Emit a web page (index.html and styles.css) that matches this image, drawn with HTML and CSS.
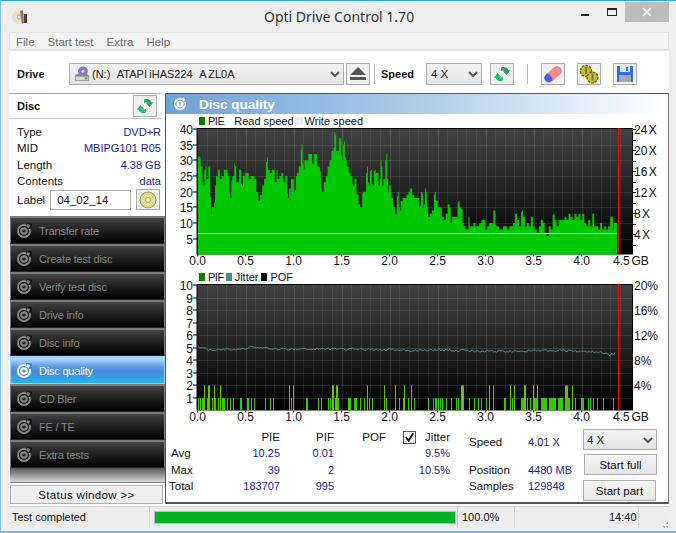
FILE: index.html
```html
<!DOCTYPE html>
<html lang="en">
<head>
<meta charset="utf-8">
<title>Opti Drive Control 1.70</title>
<link rel="stylesheet" href="styles.css">
</head>
<body>
<svg class="defs" width="0" height="0" aria-hidden="true">
  <symbol id="disc" viewBox="0 0 16 16">
    <circle cx="8" cy="8" r="7" fill="currentColor"/>
    <circle cx="8" cy="8" r="4.4" fill="none" stroke="var(--cut)" stroke-width="1.2"/>
    <circle cx="8" cy="8" r="1.6" fill="var(--cut)"/>
    <path d="M10 0h6v5l-3 1-2-2z" fill="var(--cut)"/>
    <path d="M11 1l3 1-1 3-2-1z" fill="currentColor"/>
  </symbol>
  <symbol id="arrows" viewBox="0 0 24 22">
    <g stroke="#fff" stroke-width="2" fill="#fff">
      <path d="M11 4C14 2.500 18 3.500 19 7l2 0-4 5-4-4 2 0C14 7 12 7 11 8z"/>
      <path d="M11 4C14 2.500 18 3.500 19 7l2 0-4 5-4-4 2 0C14 7 12 7 11 8z" transform="rotate(180 12 11)"/>
    </g>
    <path d="M11 4C14 2.500 18 3.500 19 7l2 0-4 5-4-4 2 0C14 7 12 7 11 8z" fill="#2f9f5f"/>
    <path d="M11 4C14 2.500 18 3.500 19 7l2 0-4 5-4-4 2 0C14 7 12 7 11 8z" fill="#1fbf70" transform="rotate(180 12 11)"/>
  </symbol>
</svg>

<div class="window">
  <header class="titlebar">
    <svg class="app-icon" viewBox="0 0 16 16" width="16" height="16">
      <circle cx="7" cy="8" r="7" fill="#e9dfc4"/>
      <circle cx="7" cy="8" r="2" fill="#fff" stroke="#b5a98a"/>
      <path d="M8 2l3-1 1 13-2 1z" fill="#8a7668"/>
      <path d="M12 5h3v9h-3z" fill="#5a3a30"/>
    </svg>
    <h1 class="title">Opti Drive Control 1.70</h1>
    <div class="win-controls">
      <span class="win-min"></span>
      <span class="win-max"></span>
      <span class="win-close">
        <svg viewBox="0 0 10 10" width="10" height="10"><path d="M1 1l8 8M9 1l-8 8" stroke="#fff" stroke-width="1.6"/></svg>
      </span>
    </div>
  </header>

  <div class="client">
    <nav class="menubar">
      <span>File</span><span>Start test</span><span>Extra</span><span>Help</span>
    </nav>

    <div class="toolbar">
      <b class="tool-label drive-label">Drive</b>
      <div class="combo drive-combo">
        <svg class="drive-icon" viewBox="0 0 18 18" width="16" height="16">
          <circle cx="10" cy="6" r="5.5" fill="#8a76b8"/>
          <circle cx="10" cy="6" r="1.6" fill="#e8e4f4"/>
          <path d="M1 11l2-2h12l2 2v6H1z" fill="#8d8d8d"/>
          <path d="M2 12h14v4H2z" fill="#d8d8d8"/>
          <path d="M12 13h3v2h-3z" fill="#2fae4a"/>
        </svg>
        <span class="combo-text drive-text">(N:)   ATAPI iHAS224   A ZL0A</span>
        <svg class="chev" viewBox="0 0 10 6" width="10" height="6"><path d="M1 1l4 4 4-4" fill="none" stroke="#555" stroke-width="2"/></svg>
      </div>
      <button class="tbtn eject-btn" type="button" aria-label="Eject">
        <svg viewBox="0 0 18 14" width="18" height="14"><path d="M9 0l8 8H1z" fill="#555"/><path d="M1 10h16v3H1z" fill="#555"/></svg>
      </button>
      <i class="tool-sep first-sep"></i>
      <b class="tool-label speed-label">Speed</b>
      <div class="combo speed-combo">
        <span class="combo-text">4 X</span>
        <svg class="chev" viewBox="0 0 10 6" width="10" height="6"><path d="M1 1l4 4 4-4" fill="none" stroke="#555" stroke-width="2"/></svg>
      </div>
      <button class="tbtn refresh-btn" type="button" aria-label="Refresh"><svg width="24" height="22"><use href="#arrows"/></svg></button>
      <i class="tool-sep second-sep"></i>
      <button class="tbtn erase-btn" type="button" aria-label="Erase">
        <svg viewBox="0 0 20 18" width="20" height="18">
          <path d="M3 10l9-8c2-1 5 0 6 2s0 4-1 5l-8 7z" fill="#f58a8a" stroke="#d86a6a" stroke-width=".6"/>
          <path d="M4 9c2 0 5 3 5 6-1 2-4 3-6 1s-2-5 1-7z" fill="#4c5cf0" stroke="#3444c8" stroke-width=".6"/>
        </svg>
      </button>
      <button class="tbtn gears-btn" type="button" aria-label="Settings">
        <svg viewBox="0 0 20 20" width="20" height="20">
          <circle cx="7" cy="7" r="5.6" fill="#c8c010" stroke="#5c5a10" stroke-width="1.4" stroke-dasharray="2.4 1.2"/>
          <circle cx="13.5" cy="13.5" r="5.4" fill="#c8c010" stroke="#5c5a10" stroke-width="1.4" stroke-dasharray="2.4 1.2"/>
          <path d="M6 3h2v7H6zM12.5 9.500h2v7h-2z" fill="#70706a"/>
        </svg>
      </button>
      <button class="tbtn save-btn" type="button" aria-label="Save">
        <svg viewBox="0 0 18 18" width="18" height="18">
          <path d="M1 1h16v16H1z" fill="#2e6ef0"/>
          <path d="M4 1h10v6H4z" fill="#dfe9fb"/>
          <path d="M10 2h2v4h-2z" fill="#2e6ef0"/>
          <path d="M3 10h12v7H3z" fill="#a8a8a8"/>
        </svg>
      </button>
    </div>

    <div class="main">
      <aside class="side">
        <div class="disc-head">
          <b>Disc</b>
          <button class="tbtn" type="button" aria-label="Refresh disc"><svg width="24" height="22"><use href="#arrows"/></svg></button>
        </div>
        <dl class="disc-info">
          <dt>Type</dt><dd>DVD+R</dd>
          <dt>MID</dt><dd>MBIPG101 R05</dd>
          <dt>Length</dt><dd>4.38 GB</dd>
          <dt>Contents</dt><dd>data</dd>
        </dl>
        <div class="label-row">
          <span>Label</span>
          <span class="label-input">04_02_14</span>
          <button class="tbtn" type="button" aria-label="Read label">
            <svg viewBox="0 0 18 18" width="18" height="18">
              <circle cx="9" cy="9" r="8" fill="#dcdc80" stroke="#8a8a60" stroke-width=".8"/>
              <circle cx="9" cy="9" r="5" fill="none" stroke="#eeeebb"/>
              <circle cx="9" cy="9" r="2.4" fill="#f4f4e0" stroke="#8a8a60" stroke-width=".8"/>
            </svg>
          </button>
        </div>
        <ul class="nav">
          <li><svg class="nav-icon"><use href="#disc"/></svg>Transfer rate</li>
          <li><svg class="nav-icon"><use href="#disc"/></svg>Create test disc</li>
          <li><svg class="nav-icon"><use href="#disc"/></svg>Verify test disc</li>
          <li><svg class="nav-icon"><use href="#disc"/></svg>Drive info</li>
          <li><svg class="nav-icon"><use href="#disc"/></svg>Disc info</li>
          <li class="active"><svg class="nav-icon"><use href="#disc"/></svg>Disc quality</li>
          <li><svg class="nav-icon"><use href="#disc"/></svg>CD Bler</li>
          <li><svg class="nav-icon"><use href="#disc"/></svg>FE / TE</li>
          <li><svg class="nav-icon"><use href="#disc"/></svg>Extra tests</li>
        </ul>
        <div class="nav-rest"></div>
        <button class="status-btn" type="button">Status window &gt;&gt;</button>
      </aside>

      <section class="panel">
        <h2 class="panel-head">
          <svg class="panel-icon"><use href="#disc"/></svg>Disc quality
        </h2>
        <div class="legend legend-top">
          <i class="sw sw-pie"></i><span class="tight">PIE</span>
          <i class="sw sw-read"></i><span>Read speed</span>
          <i class="sw sw-write"></i><span>Write speed</span>
        </div>
        <svg id="chart1" class="chart chart-top" viewBox="166 128 501 142" width="501" height="142"></svg>
        <div class="legend legend-bottom">
          <i class="sw sw-pie"></i><span class="tight">PIF</span>
          <i class="sw sw-jit"></i><span>Jitter</span>
          <i class="sw sw-pof"></i><span>POF</span>
        </div>
        <svg id="chart2" class="chart chart-bottom" viewBox="166 284 501 144" width="501" height="144"></svg>

        <div class="stats">
          <div class="table">
            <span></span><span class="h">PIE</span><span class="h">PIF</span><span class="h">POF</span>
            <span class="h jitter-head"><i class="check"><svg viewBox="0 0 12 12" width="12" height="12"><path d="M2 6l3 4 5-8" fill="none" stroke="#000" stroke-width="2"/></svg></i>Jitter</span>
            <span>Avg</span><span class="v">10.25</span><span class="v">0.01</span><span></span><span class="v">9.5%</span>
            <span>Max</span><span class="v">39</span><span class="v">2</span><span></span><span class="v">10.5%</span>
            <span class="total">Total</span><span class="v">183707</span><span class="v">995</span><span></span><span></span>
          </div>
          <div class="readout">
            <span>Speed</span><span class="val">4.01 X</span>
            <span></span><span></span>
            <span>Position</span><span class="val">4480 MB</span>
            <span>Samples</span><span class="val">129848</span>
          </div>
          <div class="actions">
            <div class="combo action-combo">
              <span class="combo-text">4 X</span>
              <svg class="chev" viewBox="0 0 10 6" width="10" height="6"><path d="M1 1l4 4 4-4" fill="none" stroke="#555" stroke-width="2"/></svg>
            </div>
            <button class="act-btn" type="button">Start full</button>
            <button class="act-btn part" type="button">Start part</button>
          </div>
        </div>
      </section>
    </div>

    <footer class="statusbar">
      <span class="st-msg">Test completed</span>
      <span class="st-prog"><i class="st-fill"></i></span>
      <span class="st-pct">100.0%</span>
      <span class="st-gap"></span>
      <span class="st-time">14:40</span>
      <span class="st-grip"></span>
    </footer>
  </div>
</div>
<script src="charts.js"></script>
</body>
</html>
```

FILE: styles.css
```css
* { box-sizing: border-box; }
html, body { margin: 0; padding: 0; }
body { width: 676px; height: 533px; overflow: hidden; font: 11.5px "Liberation Sans", Arial, sans-serif; color: #111; }
.defs { position: absolute; }
button { font: inherit; color: inherit; padding: 0; }

.window { width: 676px; height: 533px; display: flex; flex-direction: column; background: #eeeeee; border-top: 1px solid #3a9fe6; border-bottom: 2px solid #6fbbe8; border-left: 1px solid #7cc0ea; }

.titlebar { height: 31px; display: flex; align-items: flex-start; position: relative; flex: none; }
.app-icon { margin: 8px 0 0 11px; }
.title { position: absolute; left: 263px; top: 6px; margin: 0; font: 400 14px "Noto Sans", sans-serif; color: #333; white-space: nowrap; }
.win-controls { margin-left: auto; margin-right: 7px; display: flex; align-items: flex-start; }
.win-min { width: 8px; height: 2px; background: #222; margin: 13px 18px 0 0; }
.win-max { width: 10px; height: 8px; border: 1px solid #222; border-top-width: 2px; margin: 7px 8px 0 0; }
.win-close { width: 44px; height: 20px; margin-top: 1px; background: #bcbcbc; display: flex; align-items: center; justify-content: center; }

.client { flex: 1; margin: 0 7px 0 8px; padding-bottom: 3px; display: flex; flex-direction: column; min-height: 0; }

.menubar { height: 19px; flex: none; display: flex; align-items: center; background: #f4f4f4; border: 1px solid #e3e3e3; border-bottom: 2px solid #e3e3e3; padding: 1px 0 0 6px; color: #6a6a6a; }
.menubar span { margin-right: 13px; }

.toolbar { height: 42px; flex: none; background: #fff; display: flex; align-items: center; padding-top: 3px; }
.tool-label { font-size: 11px; color: #111; }
.drive-label { margin-left: 8px; width: 52px; }
.combo { height: 22px; display: flex; align-items: center; border: 1px solid #adadad; background: linear-gradient(#f2f2f2, #e4e4e4); color: #222; position: relative; }
.drive-combo { width: 275px; padding-left: 4px; }
.drive-icon { flex: none; margin-right: 2px; }
.combo-text { white-space: pre; }
.drive-text { font-size: 11px; word-spacing: -.7px; }
.chev { margin-left: auto; margin-right: 3px; flex: none; }
.tbtn { width: 24px; height: 22px; border: 1px solid #adadad; background: #f0f0f0; display: flex; align-items: center; justify-content: center; flex: none; }
.tbtn svg { display: block; }
.eject-btn { margin-left: 2px; }
.tool-sep { width: 1px; height: 20px; background: #b5b5b5; flex: none; }
.first-sep { margin-left: 4px; }
.speed-label { margin-left: 6px; width: 45px; }
.speed-combo { width: 56px; padding-left: 4px; }
.refresh-btn { margin-left: 8px; }
.second-sep { margin-left: 13px; }
.erase-btn { margin-left: 13px; }
.gears-btn { margin-left: 12px; }
.save-btn { margin-left: 12px; }

.main { flex: 1; display: flex; min-height: 0; background: #fff; }

.side { width: 156px; flex: none; display: flex; flex-direction: column; }
.disc-head { height: 26px; flex: none; border-top: 1px solid #a8a8a8; border-bottom: 1px solid #c8c8c8; display: flex; align-items: center; justify-content: space-between; padding: 0 4px 0 8px; margin-right: 4px; }
.disc-head b { font-size: 11px; }
.disc-info { margin: 5px 4px 0 8px; display: grid; grid-template-columns: auto 1fr; grid-auto-rows: 16.300px; align-items: center; }
.disc-info dt { color: #111; }
.disc-info dd { margin: 0; text-align: right; color: #1c1c9c; font-size: 11px; }
.label-row { display: flex; align-items: center; margin: 0 0 0 8px; height: 21px; }
.label-input { width: 81px; height: 20px; margin-left: 5px; border: 1px solid #b0b0b0; padding: 3px 0 0 6px; }
.label-row .tbtn { margin-left: 5px; height: 21px; }

.nav { list-style: none; margin: 6px 0 0 1px; padding: 0; width: 155px; font-size: 11px; letter-spacing: -.2px; }
.nav li { height: 28px; display: flex; align-items: center; padding-left: 5px; color: #858585; background: linear-gradient(#4a4a4a 0, #3a3a3a 10%, #000 100%); border: 1px solid #7a7a7a; border-width: 2px 1px 0 1px; border-bottom: 1px solid #222; --cut: #151515; }
.nav li.active { color: #fff; background: linear-gradient(#b6dcff 0, #5b9ae0 35%, #4a88d8 55%, #1fb6f0 100%); border-color: #a0d0ff; --cut: #3f87d8; }
.nav-icon { width: 16px; height: 16px; margin-right: 7px; flex: none; }
.nav-rest { height: 15px; flex: none; margin-left: 1px; width: 155px; background: linear-gradient(#555, #d8d8d8); border-bottom: 1px solid #888; }
.status-btn { margin: 2px 0 0 1px; width: 153px; height: 19px; border: 1px solid #b0b0b0; background: #efefef; letter-spacing: .35px; }

.panel { flex: 1; border: 1px solid #555; border-right-color: #777; border-bottom-width: 2px; display: flex; flex-direction: column; min-width: 0; margin-bottom: 2px; --cut: #79abdc; color: #111; }
.panel-head { height: 20px; flex: none; margin: 0; display: flex; align-items: center; padding-left: 7px; color: #fff; font: 700 13.500px "Liberation Sans", sans-serif; background: linear-gradient(90deg, #6fa3d8, #a5c8e8 45%, #fff 100%); }
.panel-icon { width: 14px; height: 14px; margin-right: 12px; }
.legend { height: 14px; flex: none; display: flex; align-items: center; padding-left: 33px; font-size: 11px; }
.tight { letter-spacing: -.5px; }
.sw { width: 6px; height: 8px; margin-right: 3px; flex: none; }
.sw-pie { background: #008000; }
.sw-read { background: #fff; margin-left: 1px; }
.sw-write { background: #eee; width: 9px; margin: 0 2px 0 0; }
.sw-jit { background: #4d8a8a; margin-left: 2px; }
.sw-pof { background: #000; margin-left: 3px; }
.chart { display: block; overflow: visible; flex: none; }
.chart text { font: 12px "Liberation Sans", sans-serif; fill: #111; }

.stats { flex: 1; display: flex; min-height: 0; padding-top: 1px; }
.table { width: 285px; margin-left: 4px; display: grid; grid-template-columns: 49px 60px 54px 52px 64px; grid-auto-rows: 16.330px; align-items: center; flex: none; padding-left: 1px; }
.table .h { text-align: right; }
.table .v { text-align: right; color: #1c1c9c; font-size: 11px; }
.total { margin-left: -2px; }
.jitter-head { display: flex; align-items: center; justify-content: flex-end; }
.check { width: 13px; height: 13px; border: 1px solid #555; margin-right: 9px; display: flex; align-items: center; justify-content: center; }
.readout { margin-left: 14px; width: 114px; padding-top: 5px; display: grid; grid-template-columns: 59px 1fr; grid-template-rows: 16px 12px 16px 16px; align-items: center; flex: none; }
.val { color: #1c1c9c; font-size: 11px; }
.actions { flex: none; display: flex; flex-direction: column; align-items: flex-start; }
.action-combo { width: 74px; height: 21px; padding-left: 3px; }
.act-btn { width: 73px; height: 21px; margin: 4px 0 0 1px; border: 1px solid #adadad; background: linear-gradient(#f4f4f4, #e6e6e6); color: #111; }
.act-btn.part { margin: 5px 0 0; }

.statusbar { height: 22px; flex: none; display: flex; align-items: center; background: #ededed; border-top: 1px solid #d6d6d6; font-size: 11px; }
.st-msg { width: 141px; padding-left: 3px; border-right: 1px solid #d0d0d0; height: 21px; line-height: 21px; flex: none; }
.st-prog { margin-left: 4px; width: 302px; height: 13px; border: 1px solid #bdbdbd; background: #e6e6e6; display: block; flex: none; }
.st-fill { display: block; width: 100%; height: 100%; background: #06b025; }
.st-pct { width: 58px; padding-left: 4px; margin-left: 1px; border-left: 1px solid #d0d0d0; border-right: 1px solid #d0d0d0; height: 21px; line-height: 21px; flex: none; }
.st-gap { flex: 1; }
.st-time { height: 21px; line-height: 21px; width: 30px; border-right: 1px solid #d0d0d0; flex: none; }
.st-grip { width: 30px; height: 21px; flex: none; background: radial-gradient(circle, #a8a8a8 1px, transparent 1px) right bottom / 3px 3px no-repeat, radial-gradient(circle, #a8a8a8 1px, transparent 1px) right 3px bottom / 3px 3px no-repeat, radial-gradient(circle, #a8a8a8 1px, transparent 1px) right bottom 3px / 3px 3px no-repeat; }
```

FILE: charts.js
```javascript
// Measured series from the scan: the part before and after 2.3 GB.
var pieA = [31,31,28,22,28,24,28,13,15,22,25,27,24,25,27,27,25,18,25,29,23,23,27,22,25,26,26,24,25,25,24,20,17,19,22,24,31,27,26,27,23,27,24,25,26,23,25,18,21,24,20,25,26,28,35,27,30,30,32,32,29,32,28,28,21,20,23,25,28,30,33,39,33,33,37,30,36,30,28,26,25,22,24,19,16,15,20,20,28,22,27,22,27,26,22,30,22,24,32,20,22,18,15,13,20,14,17,18,18,19,20,21,19,18,18];
var pieB = [15,20,15,21,15,12,13,14,20,17,15,15,12,11,13,16,10,12,12,12,17,15,10,9,8,12,9,9,10,9,9,10,11,11,8,9,10,10,14,9,9,8,8,9,9,8,9,9,10,13,11,9,14,12,9,10,9,12,9,8,7,9,11,10,7,6,9,8,13,11,9,11,11,11,12,11,13,12,11,13,12,13,11,13,10,9,11,9,13,9,9,8,10,8,9,8,9,12,8,10];

// [x, width, height-in-units]
var pif = [[198,1,1],[200,1,1],[202,2,1],[204,1,2],[207,1,1],[208,2,2],[212,1,1],[214,2,1],[214,1,2],[218,1,1],[220,1,2],[222,1,1],[223,2,1],[227,1,1],[230,1,1],[233,1,1],[240,2,1],[247,2,1],[251,1,1],[254,1,1],[265,1,1],[270,1,1],[273,1,1],[289,1,2],[291,1,1],[293,1,2],[306,2,1],[318,1,1],[321,1,1],[328,1,1],[330,1,1],[332,2,2],[335,3,1],[336,2,2],[337,2,1],[348,2,1],[350,1,1],[354,3,1],[360,1,1],[364,1,1],[367,1,2],[369,1,1],[372,1,1],[384,1,2],[386,1,1],[395,1,2],[399,1,1],[403,1,1],[404,1,2],[408,1,1],[411,1,2],[414,1,1],
  [428,1,1],[433,1,1],[435,2,1],[438,1,1],[440,1,1],[442,1,1],[446,1,1],[451,1,1],[456,1,1],[458,1,1],[461,3,2],[469,1,1],[474,1,1],[478,1,1],[481,1,1],[486,1,1],[489,1,2],[493,1,2],[504,2,1],[510,1,2],[512,1,1],[514,1,2],[521,5,1],[524,2,2],[527,1,1],[530,1,1],[533,1,2],[534,4,1],[537,1,2],[541,6,1],[549,7,1],[558,5,1],[565,3,2],[565,5,1],[572,1,2],[575,1,1],[581,3,1],[588,1,1],[590,1,1],[593,1,1],[597,1,1],[603,1,1],[613,1,1]];

var NS = 'http://www.w3.org/2000/svg';
function el(parent, name, attrs, text) {
  var n = document.createElementNS(NS, name);
  for (var k in attrs) n.setAttribute(k, attrs[k]);
  if (text) n.textContent = text;
  parent.appendChild(n);
  return n;
}

function frame(svg, id, top, bottom, hLines) {
  var defs = el(svg, 'defs', {});
  var g = el(defs, 'linearGradient', { id: id, x1: 0, y1: 0, x2: 0, y2: 1 });
  el(g, 'stop', { offset: 0, 'stop-color': '#424242' });
  el(g, 'stop', { offset: 1, 'stop-color': '#000' });
  el(svg, 'rect', { x: 197, y: top, width: 435, height: bottom - top, fill: 'url(#' + id + ')' });
  for (var i = 1; i < 45; i++) {
    var x = Math.round(197.5 + 9.6 * i) + 0.5;
    el(svg, 'path', { d: 'M' + x + ' ' + top + 'V' + bottom, stroke: '#fff', 'stroke-opacity': i % 5 ? 0.07 : 0.13 });
  }
  hLines.forEach(function (y) {
    el(svg, 'path', { d: 'M197 ' + y + 'H632', stroke: '#fff', 'stroke-opacity': 0.1 });
  });
}

function axes(svg, top, bottom, xLabelY) {
  el(svg, 'path', { d: 'M197 ' + (bottom) + 'V' + (top + 0.5) + 'H632.500V' + bottom, fill: 'none', stroke: '#000' });
  el(svg, 'path', { d: 'M618.500 ' + top + 'V' + bottom, stroke: '#f00', 'stroke-width': 1.2 });
  for (var i = 0; i <= 8; i++) {
    var x = 197.7 + 48 * i;
    var label = (i / 2).toFixed(1);
    el(svg, 'path', { d: 'M' + x + ' ' + bottom + 'v2', stroke: '#000' });
    el(svg, 'text', { x: x, y: xLabelY, 'text-anchor': 'middle' }, label);
  }
  el(svg, 'text', { x: 613, y: xLabelY, 'word-spacing': '-1.5' }, '4.5 GB');
}

function leftLabel(svg, y, t) {
  el(svg, 'path', { d: 'M193 ' + y + 'H197', stroke: '#000' });
  el(svg, 'text', { x: 193, y: y + 4.5, 'text-anchor': 'end' }, t);
}

// One-pixel columns: each sample, then a step halfway to the next sample.
function steps(d, data, x0, x1, bottom, scale) {
  var w = (x1 - x0) / data.length;
  data.forEach(function (v, i) {
    var next = i + 1 < data.length ? data[i + 1] : v;
    var mid = Math.abs(v - next) > 3 ? (v + next) / 2 + (i % 2 ? 2 : -2) : next;
    d += 'V' + (bottom - v * scale).toFixed(1) + 'H' + (x0 + w * (i + 0.5)).toFixed(1);
    d += 'V' + (bottom - mid * scale).toFixed(1) + 'H' + (x0 + w * (i + 1)).toFixed(1);
  });
  return d;
}

// Chart 1: PIE and read speed
(function () {
  var svg = document.getElementById('chart1');
  var top = 128, bottom = 254.5, scale = 3.14;
  var hl = [];
  for (var v = 5; v < 40; v += 5) hl.push(Math.round(bottom - v * scale) + 0.5);
  frame(svg, 'g1', top, bottom, hl);
  var d = 'M197.700 ' + bottom;
  d = steps(d, pieA, 197.7, 419, bottom, scale);
  d = steps(d, pieB, 419, 617, bottom, scale);
  d += 'V' + bottom + 'Z';
  el(svg, 'path', { d: d, fill: '#00c800' });
  el(svg, 'path', { d: 'M198 233.500H617', stroke: '#fff' });
  axes(svg, top, bottom, 265);
  for (v = 5; v <= 40; v += 5) leftLabel(svg, Math.round(bottom - v * scale), String(v));
  for (var i = 1; i <= 12; i++) {
    var y = Math.round(bottom - 10.5 * i + 0.5) + 0.5;
    el(svg, 'path', { d: 'M632 ' + y + 'h4', stroke: '#000' });
    if (i % 2 === 0) {
      el(svg, 'text', { x: 634, y: y + 4.5, 'word-spacing': '-2' }, (i * 2) + ' X');
    }
  }
})();

// Chart 2: PIF, jitter
(function () {
  var svg = document.getElementById('chart2');
  var top = 284, bottom = 410.5, unit = 12.55;
  var hl = [];
  for (var v = 1; v < 10; v++) hl.push(Math.round(bottom - v * unit) + 0.5);
  frame(svg, 'g2', top, bottom, hl);
  pif.forEach(function (b) {
    var h = b[2] * unit;
    el(svg, 'rect', { x: b[0], y: bottom - h, width: b[1], height: h, fill: b[2] > 1 ? '#66c400' : '#33cc00' });
  });
  // Jitter trace: slow drift with small sample noise, in reference pixels.
  var knots = [[198,347],[210,350],[240,349],[250,347.5],[256,346.500],[280,349],[330,349],[380,349.500],[420,350.500],[440,350],[500,351.500],[560,350.500],[600,352],[609,354.500],[616,353.500]];
  var pts = [], seed = 7;
  for (var x = 198, k = 0; x <= 616; x += 1.5) {
    while (k < knots.length - 2 && x > knots[k + 1][0]) k++;
    var a = knots[k], b = knots[k + 1];
    seed = (seed * 137 + 91) % 1009;
    var y = a[1] + (b[1] - a[1]) * (x - a[0]) / (b[0] - a[0]) + (seed % 5 - 2) * 0.5;
    pts.push(x + ',' + y.toFixed(1));
  }
  el(svg, 'polyline', { points: pts.join(' '), fill: 'none', stroke: '#4d8a8a' });
  axes(svg, top, bottom, 421);
  for (v = 1; v <= 10; v++) leftLabel(svg, Math.round(bottom - v * unit), String(v));
  for (var i = 1; i <= 5; i++) {
    var py = bottom - 25 * i;
    el(svg, 'text', { x: 634, y: py + 4.5 }, (i * 4) + '%');
  }
})();
```
